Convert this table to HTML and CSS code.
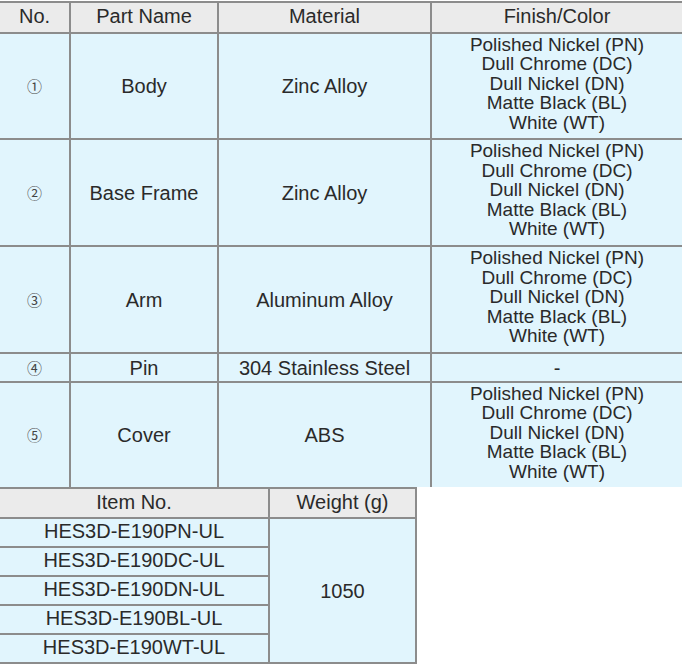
FILE: index.html
```html
<!DOCTYPE html>
<html>
<head>
<meta charset="utf-8">
<link rel="stylesheet" href="styles.css">
</head>
<body>
<div class="parts">
  <div class="cell head">No.</div>
  <div class="cell head">Part Name</div>
  <div class="cell head">Material</div>
  <div class="cell head">Finish/Color</div>

  <div class="cell num">①</div>
  <div class="cell">Body</div>
  <div class="cell">Zinc Alloy</div>
  <div class="cell finish">Polished Nickel (PN)<br>Dull Chrome (DC)<br>Dull Nickel (DN)<br>Matte Black (BL)<br>White (WT)</div>

  <div class="cell num">②</div>
  <div class="cell">Base Frame</div>
  <div class="cell">Zinc Alloy</div>
  <div class="cell finish">Polished Nickel (PN)<br>Dull Chrome (DC)<br>Dull Nickel (DN)<br>Matte Black (BL)<br>White (WT)</div>

  <div class="cell num">③</div>
  <div class="cell">Arm</div>
  <div class="cell">Aluminum Alloy</div>
  <div class="cell finish">Polished Nickel (PN)<br>Dull Chrome (DC)<br>Dull Nickel (DN)<br>Matte Black (BL)<br>White (WT)</div>

  <div class="cell num">④</div>
  <div class="cell">Pin</div>
  <div class="cell">304 Stainless Steel</div>
  <div class="cell">-</div>

  <div class="cell num">⑤</div>
  <div class="cell">Cover</div>
  <div class="cell">ABS</div>
  <div class="cell finish">Polished Nickel (PN)<br>Dull Chrome (DC)<br>Dull Nickel (DN)<br>Matte Black (BL)<br>White (WT)</div>
</div>

<div class="items">
  <div class="cell head">Item No.</div>
  <div class="cell head">Weight (g)</div>
  <div class="cell row">HES3D-E190PN-UL</div>
  <div class="cell weight">1050</div>
  <div class="cell row">HES3D-E190DC-UL</div>
  <div class="cell row">HES3D-E190DN-UL</div>
  <div class="cell row">HES3D-E190BL-UL</div>
  <div class="cell row">HES3D-E190WT-UL</div>
</div>
</body>
</html>
```

FILE: styles.css
```css
html, body {
  margin: 0;
  padding: 0;
  background: #ffffff;
}

body {
  font-family: "Liberation Sans", Arial, sans-serif;
  font-size: 20px;
  color: #2a2a2a;
  padding-top: 1px;
}

.parts {
  display: grid;
  grid-template-columns: 69px 146px 211px 250px;
  grid-template-rows: 29px 104px 105px 105px 27px 104px;
  gap: 2px;
  padding-top: 2px;
  background: #8c8c8c;
  width: 682px;
}

.items {
  display: grid;
  grid-template-columns: 268px 145px;
  grid-template-rows: 28px 27px 27px 27px 27px 27px;
  gap: 2px;
  padding: 2px 2px 2px 0;
  background: #8c8c8c;
  width: 415px;
}

.cell {
  background: #e1f5fd;
  display: flex;
  align-items: center;
  justify-content: center;
  text-align: center;
  line-height: 22px;
}

.cell.head {
  background: #ebebeb;
  padding-bottom: 3px;
}

.cell.row {
  padding-bottom: 3px;
}

.num {
  font-family: "Noto Sans CJK JP", "DejaVu Sans", sans-serif;
  font-size: 15px;
  color: #444444;
}

.finish {
  font-size: 19px;
  line-height: 19.5px;
  padding-bottom: 5px;
}

.weight {
  grid-column: 2;
  grid-row: 2 / span 5;
}
```
